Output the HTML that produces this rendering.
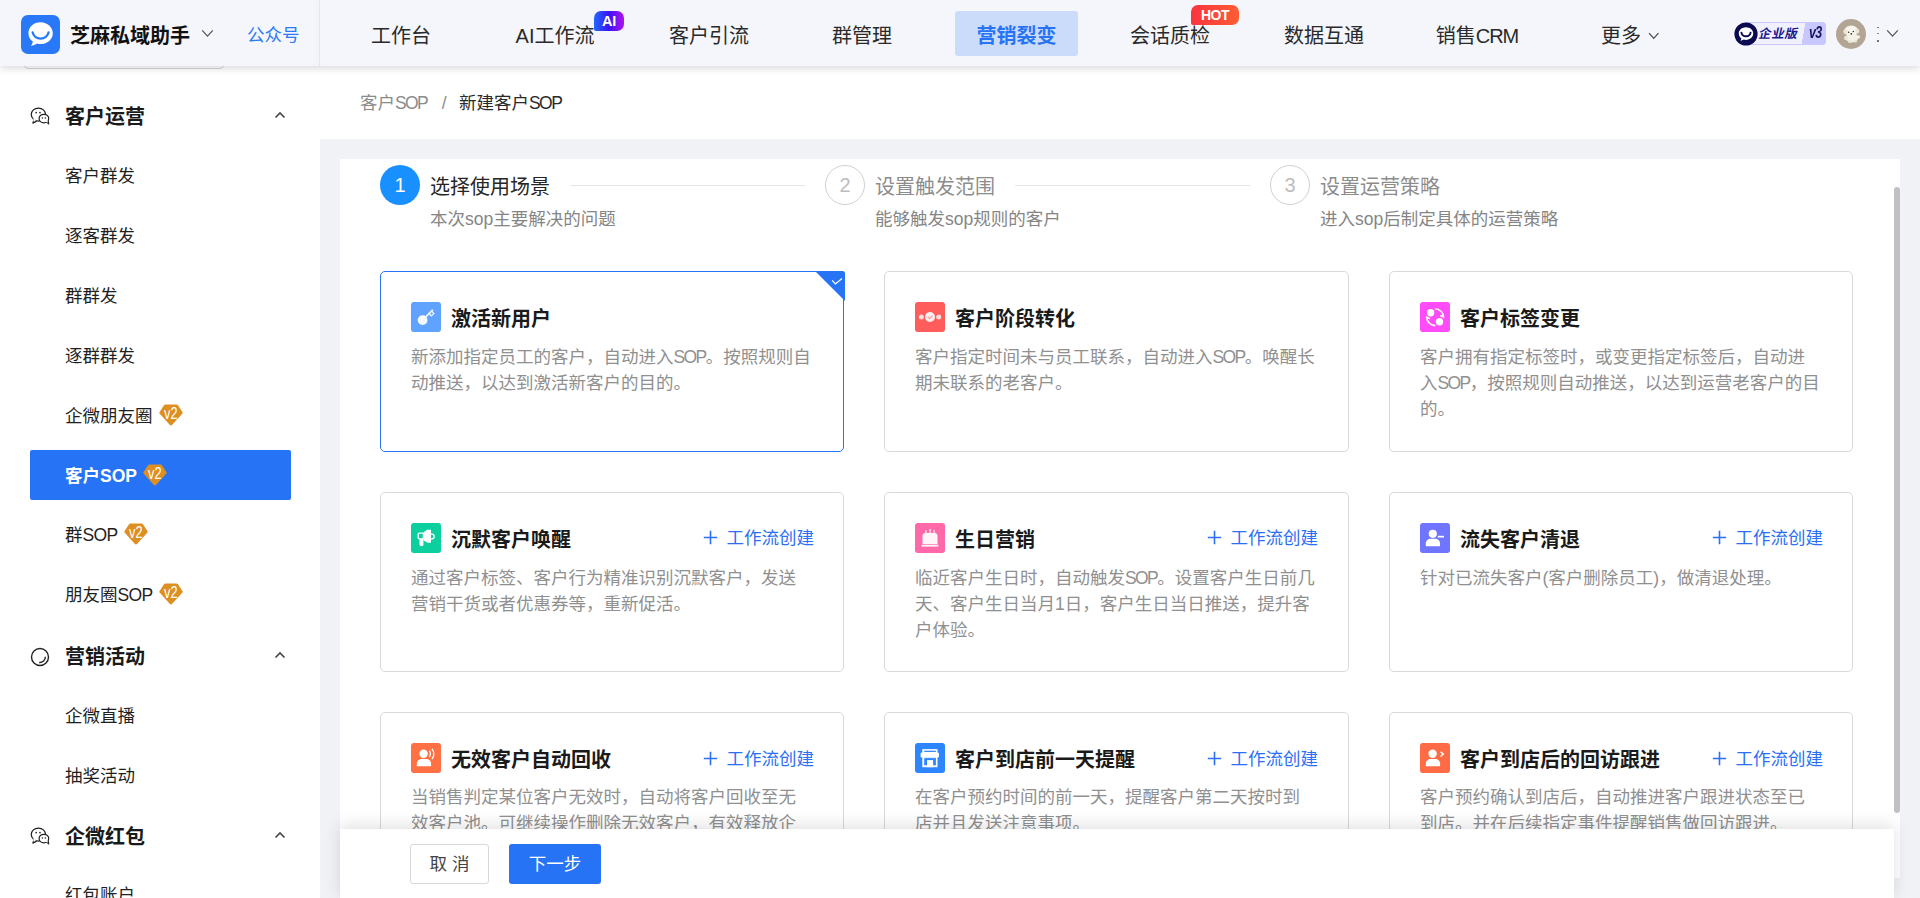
<!DOCTYPE html>
<html lang="zh-CN">
<head>
<meta charset="utf-8">
<title>新建客户SOP</title>
<style>
*{box-sizing:border-box;margin:0;padding:0}
html,body{width:1920px;height:898px;overflow:hidden;background:#f0f2f6}
body{font-family:"Liberation Sans","Noto Sans CJK SC",sans-serif;color:#1f1f1f;position:relative;font-size:17.5px}
.abs{position:absolute}
.la{letter-spacing:-1.600px}
.lb{letter-spacing:-.6px}
/* header */
#hdr{position:absolute;left:0;top:0;width:1920px;height:66px;background:#f5f6fb;box-shadow:0 2px 8px rgba(0,0,0,.16);z-index:20}
#hdr .vline{position:absolute;left:319px;top:0;width:1px;height:66px;background:#e4e5ec;box-shadow:-2px 0 4px rgba(0,0,0,.07)}
.logo{position:absolute;left:21px;top:14px;width:38px;height:38px;border-radius:7px;background:#2878f8}
.brand{position:absolute;left:70px;top:21.300px;font-size:20px;font-weight:700;line-height:30px;color:#111;white-space:nowrap}
.gzh{position:absolute;left:247px;top:20px;font-size:17.5px;line-height:30px;color:#2b7af5;white-space:nowrap}
.nav{position:absolute;top:11px;height:44.500px;line-height:50px;font-size:20px;color:#2a2a2a;text-align:center;width:154px;white-space:nowrap}
.nav.on{background:#cbdcfa;border-radius:3px;color:#2673f5;font-weight:700;width:123px}
/* sidebar */
#side{position:absolute;left:0;top:66px;width:320px;height:832px;background:#fff;z-index:5}
.sec{position:absolute;left:65px;margin-top:1px;font-size:20px;font-weight:700;line-height:30px;color:#1a1a1a;white-space:nowrap}
.it{position:absolute;left:65px;margin-top:0px;font-size:17.5px;line-height:30px;color:#1f1f1f;white-space:nowrap}
.it.on{margin-top:0;left:30px;width:261px;height:50px;background:#2673f5;color:#fff;font-weight:700;padding-left:35px;line-height:52px;border-radius:2px}
.car{position:absolute;left:274px;width:12px;height:8px}
/* main */
#bc{position:absolute;left:320px;top:66px;width:1600px;height:73px;background:#fff}
#card{position:absolute;left:340px;top:159px;width:1560px;height:719px;background:#fff;border-radius:0;overflow:hidden}
.stepc{position:absolute;top:165px;width:40px;height:40px;border-radius:50%;font-size:20px;line-height:38px;text-align:center}
.stepc.on{background:#1890ff;color:#fff;line-height:40px;margin-left:1px}
.stepc.off{border:1.3px solid #d0d0d0;color:#bdbdbd;background:#fff}
.stept{position:absolute;top:172px;font-size:20px;line-height:30px;white-space:nowrap}
.stepd{position:absolute;top:205px;font-size:17.5px;line-height:28px;white-space:nowrap;color:#858585}
.sline{position:absolute;top:185px;height:1px;background:#e6e6e6}
.cd{position:absolute;width:464px;height:180px;border:1px solid #d9d9d9;border-radius:5px;background:#fff}
.cd.sel{border-color:#2673f5}
.cd.m{width:465px}
.cd.m .wf{right:30px}
.cd.r2 .wf{top:30.700px}
.cd.r3 .wf{top:32.300px}
.cd .ic{position:absolute;left:30px;top:30px;width:30px;height:30px;border-radius:2px}
.cd .tt{position:absolute;left:70px;top:32px;font-size:20px;font-weight:700;line-height:30px;color:#1a1a1a;white-space:nowrap}
.cd .ds{position:absolute;left:30px;top:71.500px;font-size:17.5px;line-height:26px;color:#909090;white-space:nowrap}
.cd .wf{position:absolute;right:29px;top:31.500px;font-size:17.5px;line-height:28px;color:#2b6ff5;white-space:nowrap}
#foot{position:absolute;left:340px;top:829px;width:1554px;height:69px;background:#fff;box-shadow:0 -3px 16px rgba(0,0,0,.13);z-index:8}
.btn{position:absolute;top:15px;height:40px;line-height:39.500px;font-size:17.5px;text-align:center;border-radius:3px;white-space:nowrap}
</style>
</head>
<body>
<!-- HEADER -->
<div id="hdr">
  <svg class="abs" style="left:20.500px;top:14.500px" width="39" height="39" viewBox="0 0 39 39"><rect width="39" height="39" rx="7" fill="#2878f8"/><path d="M19.600 7.200c-6.800 0-12.200 4.900-12.200 11 0 3.400 1.700 6.400 4.400 8.400-.2 1.600-.9 3-1.900 4.100 2.300-.1 4.300-.9 5.900-2.200 1.200.4 2.500.6 3.800.6 6.800 0 12.200-4.900 12.200-10.900S26.400 7.200 19.600 7.200z" fill="#fff"/><path d="M11.600 17.300c.7 3.600 4 6.300 8 6.300s7.300-2.700 8-6.300" fill="none" stroke="#2878f8" stroke-width="2.300" stroke-linecap="round"/></svg>
  <div class="brand">芝麻私域助手</div>
  <svg class="abs" style="left:201px;top:29px" width="13" height="9" viewBox="0 0 13 9"><path d="M1.200 1.300l5.300 5.800 5.300-5.800" fill="none" stroke="#555" stroke-width="1.200"/></svg>
  <div class="gzh">公众号</div>
  <div class="vline"></div>
  <div class="nav" style="left:324px">工作台</div>
  <div class="nav" style="left:478px">AI工作流</div>
  <div class="nav" style="left:632px">客户引流</div>
  <div class="nav" style="left:785px">群管理</div>
  <div class="nav on" style="left:955px">营销裂变</div>
  <div class="nav" style="left:1093px">会话质检</div>
  <div class="nav" style="left:1247px">数据互通</div>
  <div class="nav" style="left:1400px">销售<span style="letter-spacing:-1px">CRM</span></div>
  <div class="nav" style="left:1544px">更多</div>
  <div class="abs" style="left:594px;top:11px;width:30px;height:20px;border-radius:7px 7px 7px 2px;background:linear-gradient(90deg,#2268ff 0%,#3a12f6 50%,#b512ee 100%);color:#fff;font-size:14.500px;font-weight:700;line-height:21.500px;text-align:center;letter-spacing:-.3px">AI</div>
  <div class="abs" style="left:1191px;top:5px;width:48px;height:20px;border-radius:7px 7px 7px 2px;background:linear-gradient(90deg,#f9353f,#ff5c33);color:#fff;font-size:14px;font-weight:700;line-height:20px;text-align:center;letter-spacing:-.5px">HOT</div>
  <svg class="abs" style="left:1648px;top:32px" width="11.500" height="8" viewBox="0 0 13 9"><path d="M1.200 1.300l5.300 5.800 5.300-5.800" fill="none" stroke="#444" stroke-width="1.300"/></svg>
  <div class="abs" style="left:1745px;top:22px;width:81px;height:22.500px;border:1px solid #c9c8ff;border-radius:0 3px 3px 0;background:linear-gradient(100deg,#f1f0ff 0,#f1f0ff 71.500%,#c9c7ff 72%,#c9c7ff 100%)"></div>
  <div class="abs" style="left:1759px;top:23px;height:22px;line-height:22px;font-size:12.500px;font-weight:700;color:#1c1a8c;letter-spacing:.6px;white-space:nowrap;transform:skewX(-13deg)">企业版</div>
  <div class="abs" style="left:1809px;top:21px;height:22px;line-height:23px;font-size:16px;font-weight:700;font-style:italic;color:#17155e;letter-spacing:-1px;white-space:nowrap;transform:scaleX(.78);transform-origin:left">v3</div>
  <svg class="abs" style="left:1733.500px;top:21.500px" width="24" height="24" viewBox="0 0 24 24"><circle cx="12" cy="12" r="11.600" fill="#0b0a50"/><path d="M12 5.300c-4 0-7.200 2.800-7.200 6.300 0 2 1 3.700 2.600 4.900-.1.900-.5 1.700-1.100 2.300 1.300-.1 2.500-.5 3.400-1.200.7.200 1.500.3 2.300.3 4 0 7.200-2.800 7.200-6.300S16 5.300 12 5.300z" fill="#fff"/><path d="M7.400 10.600c.4 2.100 2.300 3.700 4.600 3.700s4.200-1.600 4.600-3.700" fill="none" stroke="#0b0a50" stroke-width="1.900" stroke-linecap="round"/></svg>
  <svg class="abs" style="left:1836px;top:18.900px" width="30" height="30" viewBox="0 0 30 30"><defs><clipPath id="avc"><circle cx="15" cy="15" r="15"/></clipPath><filter id="avb" x="-20%" y="-20%" width="140%" height="140%"><feGaussianBlur stdDeviation=".55"/></filter></defs><g clip-path="url(#avc)"><rect width="30" height="30" fill="#b3a595"/><g filter="url(#avb)"><ellipse cx="15.200" cy="11.700" rx="6.800" ry="5.300" fill="#f8f6ee"/><ellipse cx="9.300" cy="12.600" rx="2" ry="2.600" fill="#ebe5d2"/><ellipse cx="21.300" cy="12" rx="2" ry="2.600" fill="#ebe5d2"/><ellipse cx="15.800" cy="18.800" rx="6.300" ry="4.700" fill="#f4f1e6"/><ellipse cx="21.800" cy="18" rx="2.400" ry="1.800" fill="#f4f1e6"/><ellipse cx="10" cy="19" rx="2" ry="2.300" fill="#ebe7d7"/><ellipse cx="13.800" cy="22.500" rx="1.800" ry="1.500" fill="#ebe7d7"/><ellipse cx="19.300" cy="22" rx="1.800" ry="1.500" fill="#ebe7d7"/></g><circle cx="12.600" cy="13.200" r=".75" fill="#2e2c2a"/><circle cx="17.300" cy="12.600" r=".75" fill="#2e2c2a"/><circle cx="15.300" cy="14.800" r=".85" fill="#252322"/></g></svg>
  <div class="abs" style="left:1877px;top:26.500px;width:1.800px;height:1.800px;background:#666;border-radius:1px"></div>
  <div class="abs" style="left:1877px;top:32.500px;width:1.800px;height:1.800px;background:#777;border-radius:1px"></div>
  <div class="abs" style="left:1876.500px;top:40px;width:2.500px;height:2.200px;background:#444;border-radius:1px"></div>
  <svg class="abs" style="left:1886px;top:29px" width="13" height="9" viewBox="0 0 13 9"><path d="M1.200 1.300l5.300 5.800 5.300-5.800" fill="none" stroke="#555" stroke-width="1.200"/></svg>
</div>
<!-- SIDEBAR -->
<div id="side">
<div class="abs" style="left:24px;top:-28px;width:200px;height:31px;border:1px solid #d4d4d4;border-radius:4px;background:#fff"></div>
<svg class="abs" style="left:30px;top:41px" width="20" height="18" viewBox="0 0 20 18"><path d="M3.900 12.400l-1 3.700 3.800-2" fill="#fff" stroke="#222" stroke-width="1.200" stroke-linejoin="round"/><ellipse cx="8.400" cy="7.500" rx="7.100" ry="6.500" fill="#fff" stroke="#222" stroke-width="1.250"/><path d="M3.600 11.300l-.5 3.300 3.500-1.400z" fill="#fff"/><circle cx="6.200" cy="5.600" r=".85" fill="#222"/><circle cx="10" cy="5.600" r=".85" fill="#222"/><path d="M16.500 15l2.200 1.900-.5-3" fill="#fff" stroke="#222" stroke-width="1.200" stroke-linejoin="round"/><ellipse cx="13.900" cy="11.600" rx="4.800" ry="4.300" fill="#fff" stroke="#222" stroke-width="1.250"/><path d="M15.600 14.300l2.300 1.500-.3-2.600z" fill="#fff"/><circle cx="12.400" cy="10.900" r=".75" fill="#222"/><circle cx="15.400" cy="10.900" r=".75" fill="#222"/></svg>
<div class="sec" style="top:35px">客户运营</div>
<svg class="car" style="top:45px" viewBox="0 0 12 8"><path d="M1.5 6.5L6 2l4.5 4.5" fill="none" stroke="#444" stroke-width="1.6"/></svg>
<div class="it" style="top:95px">客户群发</div>
<div class="it" style="top:155px">逐客群发</div>
<div class="it" style="top:215px">群群发</div>
<div class="it" style="top:275px">逐群群发</div>
<div class="it" style="top:335px">企微朋友圈<span style="position:relative;display:inline-block;width:24px;height:22px;margin-left:6.500px;vertical-align:top;top:3.300px"><svg class="v2" width="24" height="22" viewBox="0 0 24 22" style="position:absolute;top:0;left:0"><path d="M7.600 .4h9.800c.6 0 1.100.300 1.400.7l4.600 6.800c.4.600.3 1.400-.2 1.900L13 21c-.600.600-1.500.600-2.100 0L.8 9.800c-.5-.5-.6-1.300-.2-1.900l4.600-6.800c.3-.4.800-.7 1.400-.7z" fill="#dd8f22"/><text x="11.800" y="15" font-family="Liberation Sans,sans-serif" font-size="17" font-weight="400" fill="#fff" text-anchor="middle" textLength="13.500" lengthAdjust="spacingAndGlyphs">v2</text></svg></span></div>
<div class="it on" style="top:384px">客户SOP<span style="position:relative;display:inline-block;width:24px;height:22px;margin-left:6.500px;vertical-align:top;top:13.500px"><svg class="v2" width="24" height="22" viewBox="0 0 24 22" style="position:absolute;top:0;left:0"><path d="M7.600 .4h9.800c.6 0 1.100.300 1.400.7l4.600 6.800c.4.600.3 1.400-.2 1.900L13 21c-.600.600-1.500.600-2.100 0L.8 9.800c-.5-.5-.6-1.300-.2-1.900l4.600-6.800c.3-.4.800-.7 1.400-.7z" fill="#dd8f22"/><text x="11.800" y="15" font-family="Liberation Sans,sans-serif" font-size="17" font-weight="400" fill="#fff" text-anchor="middle" textLength="13.500" lengthAdjust="spacingAndGlyphs">v2</text></svg></span></div>
<div class="it" style="top:454px">群<span class="lb">SOP</span><span style="position:relative;display:inline-block;width:24px;height:22px;margin-left:6.500px;vertical-align:top;top:3.300px"><svg class="v2" width="24" height="22" viewBox="0 0 24 22" style="position:absolute;top:0;left:0"><path d="M7.600 .4h9.800c.6 0 1.100.300 1.400.7l4.600 6.800c.4.600.3 1.400-.2 1.900L13 21c-.600.600-1.500.600-2.100 0L.8 9.800c-.5-.5-.6-1.300-.2-1.900l4.600-6.800c.3-.4.800-.7 1.400-.7z" fill="#dd8f22"/><text x="11.800" y="15" font-family="Liberation Sans,sans-serif" font-size="17" font-weight="400" fill="#fff" text-anchor="middle" textLength="13.500" lengthAdjust="spacingAndGlyphs">v2</text></svg></span></div>
<div class="it" style="top:514px">朋友圈<span class="lb">SOP</span><span style="position:relative;display:inline-block;width:24px;height:22px;margin-left:6.500px;vertical-align:top;top:3.300px"><svg class="v2" width="24" height="22" viewBox="0 0 24 22" style="position:absolute;top:0;left:0"><path d="M7.600 .4h9.800c.6 0 1.100.300 1.400.7l4.600 6.800c.4.600.3 1.400-.2 1.900L13 21c-.600.600-1.500.600-2.100 0L.8 9.800c-.5-.5-.6-1.300-.2-1.900l4.600-6.800c.3-.4.800-.7 1.400-.7z" fill="#dd8f22"/><text x="11.800" y="15" font-family="Liberation Sans,sans-serif" font-size="17" font-weight="400" fill="#fff" text-anchor="middle" textLength="13.500" lengthAdjust="spacingAndGlyphs">v2</text></svg></span></div>
<svg class="abs" style="left:30px;top:580.8px" width="20" height="20" viewBox="0 0 20 20"><circle cx="10" cy="10" r="8.500" fill="none" stroke="#222" stroke-width="1.400"/><path d="M15.400 9.800a5.700 5.700 0 0 1-6.200 5.700" fill="none" stroke="#222" stroke-width="1.400"/></svg>
<div class="sec" style="top:575px">营销活动</div>
<svg class="car" style="top:585px" viewBox="0 0 12 8"><path d="M1.5 6.5L6 2l4.5 4.5" fill="none" stroke="#444" stroke-width="1.6"/></svg>
<div class="it" style="top:635px">企微直播</div>
<div class="it" style="top:695px">抽奖活动</div>
<svg class="abs" style="left:30px;top:761px" width="20" height="18" viewBox="0 0 20 18"><path d="M3.900 12.400l-1 3.700 3.800-2" fill="#fff" stroke="#222" stroke-width="1.200" stroke-linejoin="round"/><ellipse cx="8.400" cy="7.500" rx="7.100" ry="6.500" fill="#fff" stroke="#222" stroke-width="1.250"/><path d="M3.600 11.300l-.5 3.300 3.500-1.400z" fill="#fff"/><circle cx="6.200" cy="5.600" r=".85" fill="#222"/><circle cx="10" cy="5.600" r=".85" fill="#222"/><path d="M16.500 15l2.200 1.900-.5-3" fill="#fff" stroke="#222" stroke-width="1.200" stroke-linejoin="round"/><ellipse cx="13.900" cy="11.600" rx="4.800" ry="4.300" fill="#fff" stroke="#222" stroke-width="1.250"/><path d="M15.600 14.300l2.300 1.500-.3-2.600z" fill="#fff"/><circle cx="12.400" cy="10.900" r=".75" fill="#222"/><circle cx="15.400" cy="10.900" r=".75" fill="#222"/></svg>
<div class="sec" style="top:755px">企微红包</div>
<svg class="car" style="top:765px" viewBox="0 0 12 8"><path d="M1.5 6.5L6 2l4.5 4.5" fill="none" stroke="#444" stroke-width="1.6"/></svg>
<div class="it" style="top:814px">红包账户</div>
</div>
<!-- BREADCRUMB -->
<div id="bc"><div class="abs" style="left:40px;top:22.700px;font-size:17.5px;line-height:28px;white-space:nowrap;color:#8c8c8c">客户<span class="la">SOP</span><span style="margin:0 12.500px 0 14.500px;color:#8c8c8c">/</span><span style="color:#2a2a2a">新建客户<span class="la">SOP</span></span></div></div>
<!-- CARD -->
<div id="card"></div>
<div class="stepc on" style="left:379px">1</div><div class="stept" style="left:430px;color:#262626">选择使用场景</div><div class="stepd" style="left:430px">本次sop主要解决的问题</div><div class="sline" style="left:570px;width:235px"></div>
<div class="stepc off" style="left:825px">2</div><div class="stept" style="left:875px;color:#8c8c8c">设置触发范围</div><div class="stepd" style="left:875px">能够触发sop规则的客户</div><div class="sline" style="left:1015px;width:235px"></div>
<div class="stepc off" style="left:1270px">3</div><div class="stept" style="left:1320px;color:#8c8c8c">设置运营策略</div><div class="stepd" style="left:1320px">进入sop后制定具体的运营策略</div>
<div class="abs" style="left:1893.500px;top:187px;width:6.500px;height:626px;border-radius:3.500px;background:#c1c1c1;z-index:9"></div>
<div class="cd sel" style="left:380px;top:271px;height:181.300px"><svg class="ic" viewBox="0 0 30 30"><rect width="30" height="30" rx="2.500" fill="#5fa2ff"/><circle cx="11.600" cy="18.100" r="4.900" fill="#fff" opacity=".94"/><path d="M14 15.600L21.800 7.800" stroke="#fff" stroke-width="1.800" fill="none" opacity=".88"/><path d="M18.300 11.700l2 2.200 2.600-2.400-2-2.100" fill="none" stroke="#fff" stroke-width="1.300" opacity=".88"/></svg><div class="tt">激活新用户</div><div class="ds">新添加指定员工的客户，自动进入<span class="la">SOP</span>。按照规则自<br>动推送，以达到激活新客户的目的。</div><svg class="abs" style="right:-2px;top:-1px" width="30" height="30" viewBox="0 0 30 30"><path d="M0 0h27.500a2.500 2.500 0 0 1 2.500 2.500V30z" fill="#2673f5"/><path d="M17.200 9.400l3.300 3.500 6.500-5.300" fill="none" stroke="#fff" stroke-width="1.300"/></svg></div>
<div class="cd m" style="left:884px;top:271px;height:181.300px"><svg class="ic" viewBox="0 0 30 30"><rect width="30" height="30" rx="2.500" fill="#ff5c5c"/><circle cx="6.3" cy="15" r="2.5" fill="#fff" opacity=".8"/><circle cx="23.700" cy="15" r="2.500" fill="#fff" opacity=".8"/><circle cx="15" cy="15" r="5" fill="#fff" opacity=".9"/><path d="M12.800 14.800l1.800 1.900 3-3.200" stroke="#ffa2a2" stroke-width="1.200" fill="none"/></svg><div class="tt">客户阶段转化</div><div class="ds">客户指定时间未与员工联系，自动进入<span class="la">SOP</span>。唤醒长<br>期未联系的老客户。</div></div>
<div class="cd" style="left:1389px;top:271px;height:181.300px"><svg class="ic" viewBox="0 0 30 30"><rect width="30" height="30" rx="2.500" fill="#ff4bf8"/><circle cx="10.600" cy="10.800" r="3.700" fill="#fff"/><circle cx="19.500" cy="19.700" r="3.700" fill="#fff"/><path d="M14.800 6.800c4.800.1 8.600 3.700 8.700 8.300l-3.300-1.500" fill="none" stroke="#fff" stroke-width="1.600"/><path d="M15.400 23.600c-4.800-.1-8.600-3.700-8.700-8.300l3.300 1.500" fill="none" stroke="#fff" stroke-width="1.600"/></svg><div class="tt">客户标签变更</div><div class="ds">客户拥有指定标签时，或变更指定标签后，自动进<br>入<span class="la">SOP</span>，按照规则自动推送，以达到运营老客户的目<br>的。</div></div>
<div class="cd r2" style="left:380px;top:492px"><svg class="ic" viewBox="0 0 30 30"><rect width="30" height="30" rx="2.500" fill="#0bcf9f"/><g transform="translate(0 1.200)"><rect x="8.500" y="14" width="3.900" height="8.100" rx="1.700" fill="#fff"/><rect x="7.250" y="8.850" width="5.200" height="5.800" rx="1" fill="#0bcf9f" stroke="#fff" stroke-width="1.350"/><path d="M12.300 8.300l3.400-2.400c.4-.3.900-.4 1.400-.4H20v13h-2.900c-.5 0-1-.2-1.400-.4l-3.400-2z" fill="#fff"/><path d="M20 9.700c1.800 0 3.100 1.200 3.100 2.600s-1.300 2.600-3.100 2.600" fill="none" stroke="#fff" stroke-width="1.350"/></g></svg><div class="tt">沉默客户唤醒</div><div class="wf"><svg width="15" height="15" viewBox="0 0 15 15" style="vertical-align:-1.500px;margin-right:8.500px"><path d="M7.500 .8v13.400M.8 7.500h13.400" stroke="#2b6ff5" stroke-width="1.600"/></svg>工作流创建</div><div class="ds">通过客户标签、客户行为精准识别沉默客户，发送<br>营销干货或者优惠券等，重新促活。</div></div>
<div class="cd m r2" style="left:884px;top:492px"><svg class="ic" viewBox="0 0 30 30"><rect width="30" height="30" rx="2.500" fill="#ff69aa"/><path d="M7.500 21V12.800c0-1.500 1.200-2.700 2.700-2.700h9.600c1.500 0 2.700 1.200 2.700 2.700V21z" fill="#fff" opacity=".93"/><rect x="6.700" y="21.700" width="16.600" height="1.900" fill="#fff" opacity=".93"/><rect x="10.300" y="7.200" width="1.300" height="3" fill="#fff" opacity=".9"/><rect x="14.400" y="6" width="1.300" height="4.200" fill="#fff" opacity=".9"/><rect x="18.400" y="7.200" width="1.300" height="3" fill="#fff" opacity=".9"/></svg><div class="tt">生日营销</div><div class="wf"><svg width="15" height="15" viewBox="0 0 15 15" style="vertical-align:-1.500px;margin-right:8.500px"><path d="M7.500 .8v13.400M.8 7.500h13.400" stroke="#2b6ff5" stroke-width="1.600"/></svg>工作流创建</div><div class="ds">临近客户生日时，自动触发<span class="la">SOP</span>。设置客户生日前几<br>天、客户生日当月1日，客户生日当日推送，提升客<br>户体验。</div></div>
<div class="cd r2" style="left:1389px;top:492px"><svg class="ic" viewBox="0 0 30 30"><rect width="30" height="30" rx="2.500" fill="#7075ff"/><circle cx="12.800" cy="10.800" r="4.100" fill="#fff"/><path d="M5.800 23.300v-2.800c0-2.800 2.300-4.700 5-4.700h4.200c2.800 0 5 1.900 5 4.700v2.800z" fill="#fff"/><rect x="17" y="12" width="7.300" height="3.400" fill="#7075ff"/><rect x="17.800" y="12.800" width="6.200" height="1.700" fill="#fff"/></svg><div class="tt">流失客户清退</div><div class="wf"><svg width="15" height="15" viewBox="0 0 15 15" style="vertical-align:-1.500px;margin-right:8.500px"><path d="M7.500 .8v13.400M.8 7.500h13.400" stroke="#2b6ff5" stroke-width="1.600"/></svg>工作流创建</div><div class="ds">针对已流失客户(客户删除员工)，做清退处理。</div></div>
<div class="cd r3" style="left:380px;top:711.500px"><svg class="ic" viewBox="0 0 30 30"><rect width="30" height="30" rx="2.500" fill="#ff7043"/><circle cx="12.600" cy="10.800" r="4.200" fill="#fff"/><path d="M5.800 23.300v-2.600c0-2.800 2.300-4.800 5-4.800h4.300c2.800 0 5 2 5 4.800v2.600z" fill="#fff"/><path d="M18.300 7.600c1.300 1.900 1.300 4.500 0 6.400" fill="none" stroke="#fff" stroke-width="1.300"/><path d="M21 5.800c2.200 3 2.200 7.200 0 10.200" fill="none" stroke="#fff" stroke-width="1.300"/></svg><div class="tt">无效客户自动回收</div><div class="wf"><svg width="15" height="15" viewBox="0 0 15 15" style="vertical-align:-1.500px;margin-right:8.500px"><path d="M7.500 .8v13.400M.8 7.500h13.400" stroke="#2b6ff5" stroke-width="1.600"/></svg>工作流创建</div><div class="ds">当销售判定某位客户无效时，自动将客户回收至无<br>效客户池。可继续操作删除无效客户，有效释放企<br>微客户容量。</div></div>
<div class="cd m r3" style="left:884px;top:711.500px"><svg class="ic" viewBox="0 0 30 30"><rect width="30" height="30" rx="2.500" fill="#2d85ff"/><rect x="7.300" y="6.100" width="15.200" height="18.100" fill="#fff"/><rect x="9.200" y="7.700" width="11.700" height="1.250" fill="#2d85ff"/><rect x="5.600" y="9.500" width="18.300" height="4.900" rx="1.200" fill="#fff"/><rect x="9.200" y="14.700" width="11.700" height="7.600" fill="#2d85ff"/><path d="M9.200 14.700h11.700" stroke="#fff" stroke-width=".9" stroke-dasharray="1.400 .9"/><rect x="12" y="17.100" width="6.100" height="7.100" fill="#fff"/></svg><div class="tt">客户到店前一天提醒</div><div class="wf"><svg width="15" height="15" viewBox="0 0 15 15" style="vertical-align:-1.500px;margin-right:8.500px"><path d="M7.500 .8v13.400M.8 7.500h13.400" stroke="#2b6ff5" stroke-width="1.600"/></svg>工作流创建</div><div class="ds">在客户预约时间的前一天，提醒客户第二天按时到<br>店并且发送注意事项。</div></div>
<div class="cd r3" style="left:1389px;top:711.500px"><svg class="ic" viewBox="0 0 30 30"><rect width="30" height="30" rx="2.500" fill="#ff6b45"/><circle cx="12.600" cy="10.800" r="4.200" fill="#fff"/><path d="M5.800 23.300v-2.600c0-2.800 2.300-4.800 5-4.800h4.300c2.800 0 5 2 5 4.800v2.600z" fill="#fff"/><path d="M18.300 7.500c1.300 1.800 1.300 4.600 0 6.600" fill="none" stroke="#ff6b45" stroke-width="2.200"/><path d="M20.500 8.700l2.800 2.400-2.800 2.500" fill="none" stroke="#fff" stroke-width="1.400"/></svg><div class="tt">客户到店后的回访跟进</div><div class="wf"><svg width="15" height="15" viewBox="0 0 15 15" style="vertical-align:-1.500px;margin-right:8.500px"><path d="M7.500 .8v13.400M.8 7.500h13.400" stroke="#2b6ff5" stroke-width="1.600"/></svg>工作流创建</div><div class="ds">客户预约确认到店后，自动推进客户跟进状态至已<br>到店。并在后续指定事件提醒销售做回访跟进。</div></div>
<div id="foot">
  <div class="btn" style="left:70px;width:79px;border:1.3px solid #d9d9d9;color:#444;background:#fff">取 消</div>
  <div class="btn" style="left:169px;width:92px;background:#2673f5;color:#fff;line-height:41.500px">下一步</div>
</div>
</body>
</html>
